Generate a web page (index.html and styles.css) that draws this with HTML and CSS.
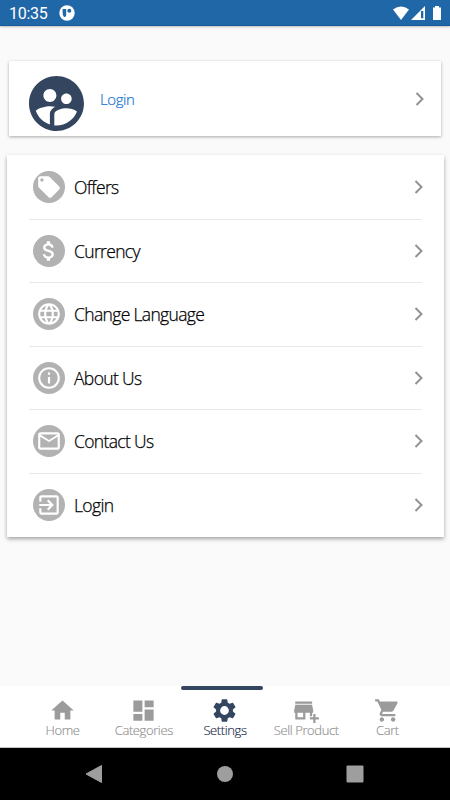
FILE: index.html
```html
<!DOCTYPE html>
<html lang="en">

<head>
    <meta charset="UTF-8">
    <meta name="viewport" content="width=device-width, initial-scale=1.0">
    <title>Settings</title>
    <link rel="stylesheet" href="styles.css">
</head>

<body>

    <header class="status">
        <span class="time">10:35</span>
        <svg class="app-dot" viewBox="0 0 16 16"><circle cx="8" cy="8" r="7.7" fill="#fff"/><path d="M3.600 4h3.600v6a2 2 0 0 1-2.200 2q-1.400-1.500-1.400-4z" fill="#2067a8"/><circle cx="10.300" cy="5.700" r="2" fill="#2067a8"/></svg>
        <svg class="signals" viewBox="0 0 50 16"><path d="M0 3.6Q8-2.6 16 3.6L8 14z" fill="#fff"/><path d="M32 0v14H18z" fill="#fff"/><path d="M28 5h2.3v7.3H28z" fill="#2067a8"/><path d="M40 1.5h2V0h4v1.5h2V14h-8z" fill="#fff"/></svg>
    </header>

    <main class="page">
        <!-- profile card -->
        <div class="card profile">
            <svg class="avatar" viewBox="2 2 20 20"><path d="M11.99 2c-5.52 0-10 4.48-10 10s4.48 10 10 10 10-4.48 10-10-4.48-10-10-10zm3.61 6.34c1.07 0 1.93.86 1.93 1.93 0 1.07-.86 1.93-1.93 1.93-1.07 0-1.93-.86-1.93-1.93-.01-1.07.86-1.93 1.93-1.93zm-6-1.58c1.3 0 2.36 1.06 2.36 2.36 0 1.3-1.06 2.36-2.36 2.36s-2.36-1.06-2.36-2.36c0-1.31 1.05-2.36 2.36-2.36zm0 9.13v3.75c-2.4-.75-4.3-2.6-5.14-4.96 1.05-1.12 3.67-1.69 5.14-1.69.53 0 1.2.08 1.9.22-1.64.87-1.9 2.02-1.9 2.68zM11.99 20c-.27 0-.53-.01-.79-.04v-4.07c0-1.42 2.94-2.13 4.4-2.13 1.07 0 2.92.39 3.84 1.15-1.17 2.97-4.06 5.09-7.45 5.09z"/></svg>
            <a class="login">Login</a>
            <svg class="arrow" viewBox="0 0 8 14"><path d="M1 1l6 6-6 6"/></svg>
        </div>

        <!-- settings list -->
        <div class="card list">
            <div class="row">
                <span class="badge"><svg viewBox="0 0 24 24"><path d="M21.41 11.58l-9-9C12.05 2.22 11.55 2 11 2H4c-1.1 0-2 .9-2 2v7c0 .55.22 1.05.59 1.42l9 9c.36.36.86.58 1.41.58s1.05-.22 1.41-.59l7-7c.37-.36.59-.86.59-1.41s-.23-1.06-.59-1.42zM5.5 7C4.67 7 4 6.33 4 5.5S4.67 4 5.5 4 7 4.67 7 5.5 6.33 7 5.5 7z"/></svg></span>
                <span class="label">Offers</span>
                <svg class="arrow" viewBox="0 0 8 14"><path d="M1 1l6 6-6 6"/></svg>
            </div>
            <div class="row">
                <span class="badge"><svg viewBox="0 0 24 24"><path d="M11.8 10.9c-2.27-.59-3-1.2-3-2.15 0-1.09 1.01-1.85 2.7-1.85 1.78 0 2.44.85 2.5 2.1h2.21c-.07-1.72-1.12-3.3-3.21-3.81V3h-3v2.16c-1.94.42-3.5 1.68-3.5 3.61 0 2.31 1.91 3.46 4.7 4.13 2.5.6 3 1.48 3 2.41 0 .69-.49 1.79-2.7 1.79-2.06 0-2.87-.92-2.98-2.1h-2.2c.12 2.19 1.76 3.42 3.68 3.83V21h3v-2.15c1.95-.37 3.5-1.5 3.5-3.55 0-2.84-2.43-3.81-4.7-4.4z"/></svg></span>
                <span class="label">Currency</span>
                <svg class="arrow" viewBox="0 0 8 14"><path d="M1 1l6 6-6 6"/></svg>
            </div>
            <div class="row">
                <span class="badge"><svg viewBox="0 0 24 24"><path d="M11.99 2C6.47 2 2 6.48 2 12s4.47 10 9.99 10C17.52 22 22 17.52 22 12S17.52 2 11.99 2zm6.93 6h-2.95c-.32-1.25-.78-2.45-1.38-3.56 1.84.63 3.37 1.91 4.33 3.56zM12 4.04c.83 1.2 1.48 2.53 1.91 3.96h-3.82c.43-1.43 1.08-2.76 1.91-3.96zM4.26 14C4.1 13.36 4 12.69 4 12s.1-1.36.26-2h3.38c-.08.66-.14 1.32-.14 2s.06 1.34.14 2H4.26zm.82 2h2.95c.32 1.25.78 2.45 1.38 3.56-1.84-.63-3.37-1.9-4.33-3.56zm2.95-8H5.08c.96-1.66 2.49-2.93 4.33-3.56C8.81 5.55 8.35 6.75 8.03 8zM12 19.96c-.83-1.2-1.48-2.53-1.91-3.96h3.82c-.43 1.43-1.08 2.76-1.91 3.96zM14.34 14H9.66c-.09-.66-.16-1.32-.16-2s.07-1.35.16-2h4.68c.09.65.16 1.32.16 2s-.07 1.34-.16 2zm.25 5.56c.6-1.11 1.06-2.31 1.38-3.56h2.95c-.96 1.65-2.49 2.93-4.33 3.56zM16.36 14c.08-.66.14-1.32.14-2s-.06-1.34-.14-2h3.38c.16.64.26 1.31.26 2s-.1 1.36-.26 2h-3.38z"/></svg></span>
                <span class="label">Change Language</span>
                <svg class="arrow" viewBox="0 0 8 14"><path d="M1 1l6 6-6 6"/></svg>
            </div>
            <div class="row">
                <span class="badge"><svg viewBox="0 0 24 24"><path d="M11 7h2v2h-2zm0 4h2v6h-2zm1-9C6.48 2 2 6.48 2 12s4.48 10 10 10 10-4.48 10-10S17.52 2 12 2zm0 18c-4.41 0-8-3.59-8-8s3.59-8 8-8 8 3.59 8 8-3.59 8-8 8z"/></svg></span>
                <span class="label">About Us</span>
                <svg class="arrow" viewBox="0 0 8 14"><path d="M1 1l6 6-6 6"/></svg>
            </div>
            <div class="row">
                <span class="badge"><svg viewBox="0 0 24 24"><path d="M22 6c0-1.100-.9-2-2-2H4c-1.100 0-2 .9-2 2v12c0 1.100.9 2 2 2h16c1.100 0 2-.9 2-2V6zm-2 0l-8 5-8-5h16zm0 12H4V8l8 5 8-5v10z"/></svg></span>
                <span class="label">Contact Us</span>
                <svg class="arrow" viewBox="0 0 8 14"><path d="M1 1l6 6-6 6"/></svg>
            </div>
            <div class="row">
                <span class="badge"><svg viewBox="0 0 24 24"><path d="M10.090 15.590L11.500 17l5-5-5-5-1.410 1.410L12.670 11H3v2h9.670l-2.580 2.590zM19 3H5c-1.110 0-2 .9-2 2v4h2V5h14v14H5v-4H3v4c0 1.100.89 2 2 2h14c1.100 0 2-.9 2-2V5c0-1.100-.9-2-2-2z"/></svg></span>
                <span class="label">Login</span>
                <svg class="arrow" viewBox="0 0 8 14"><path d="M1 1l6 6-6 6"/></svg>
            </div>
        </div>
    </main>

    <nav class="tabs">
        <div class="tab">
            <svg viewBox="0 0 24 24"><path d="M10 20v-6h4v6h5v-8h3L12 3 2 12h3v8z"/></svg>
            <span>Home</span>
        </div>
        <div class="tab">
            <svg viewBox="0 0 24 24"><path d="M3 13h8V3H3v10zm0 8h8v-6H3v6zm10 0h8V11h-8v10zm0-18v6h8V3h-8z"/></svg>
            <span>Categories</span>
        </div>
        <div class="tab active">
            <svg viewBox="0 0 24 24"><path d="M19.430 12.980c.04-.32.07-.64.07-.98s-.03-.66-.07-.98l2.110-1.650c.19-.15.24-.42.12-.64l-2-3.460c-.12-.22-.39-.3-.61-.22l-2.490 1c-.52-.4-1.080-.73-1.690-.98l-.38-2.650C14.460 2.180 14.250 2 14 2h-4c-.25 0-.46.18-.49.42l-.38 2.650c-.61.25-1.170.59-1.690.98l-2.490-1c-.23-.09-.49 0-.61.22l-2 3.460c-.13.22-.07.49.12.64l2.110 1.650c-.04.32-.07.65-.07.98s.03.66.07.98l-2.110 1.650c-.19.15-.24.42-.12.64l2 3.460c.12.22.39.3.61.22l2.490-1c.52.4 1.080.73 1.690.98l.38 2.650c.03.24.24.42.49.42h4c.25 0 .46-.18.49-.42l.38-2.650c.61-.25 1.170-.59 1.690-.98l2.490 1c.23.09.49 0 .61-.22l2-3.460c.12-.22.07-.49-.12-.64l-2.110-1.650zM12 15.900a3.900 3.900 0 1 1 0-7.800 3.900 3.900 0 0 1 0 7.800z"/></svg>
            <span>Settings</span>
        </div>
        <div class="tab">
            <svg viewBox="0 0 24 24"><path d="M15 17h2v-3h1v-2l-1-5H2l-1 5v2h1v6h9v-6h4v3zm-6 1H4v-4h5v4zM2 4h15v2H2zM20 18v-3h-2v3h-3v2h3v3h2v-3h3v-2z"/><path d="M2 6h15v1H2z" opacity=".35"/></svg>
            <span>Sell Product</span>
        </div>
        <div class="tab">
            <svg viewBox="0 0 24 24"><path d="M7 18c-1.100 0-1.990.9-1.990 2S5.900 22 7 22s2-.9 2-2-.9-2-2-2zM1 2v2h2l3.600 7.590-1.350 2.450c-.16.28-.25.61-.25.96 0 1.100.9 2 2 2h12v-2H7.420c-.14 0-.25-.11-.25-.25l.03-.12.9-1.630h7.450c.75 0 1.410-.41 1.750-1.030l3.580-6.490c.08-.14.12-.31.12-.48 0-.55-.45-1-1-1H5.210l-.94-2H1zm16 16c-1.100 0-1.990.9-1.990 2s.89 2 1.990 2 2-.9 2-2-.9-2-2-2z"/></svg>
            <span>Cart</span>
        </div>
    </nav>

    <footer class="system">
        <svg viewBox="0 0 18 18"><path d="M16.500.5v17L1 9z" stroke-linejoin="round" stroke="#9e9e9e"/></svg>
        <svg viewBox="0 0 18 18"><circle cx="9" cy="9" r="8"/></svg>
        <svg viewBox="0 0 18 18"><rect x=".5" y=".5" width="17" height="17" rx="1"/></svg>
    </footer>

</body>
</html>
```
FILE: styles.css
```css
* {
    box-sizing: border-box;
}

body {
    margin: 0;
    height: 800px;
    display: flex;
    flex-direction: column;
    overflow: hidden;
    background-color: #fafafa;
    font-family: "Open Sans", "Noto Sans", sans-serif;
}

svg {
    display: block;
    flex: none;
}

.status {
    height: 26px;
    padding: 1px 8px 0 9px;
    display: flex;
    align-items: center;
    background-color: #2067a8;
    border-bottom: 1px solid #185a98;
    box-shadow: 0 1px 2px rgba(0, 0, 0, 0.25);
}

.time {
    width: 50px;
    font-family: Roboto, sans-serif;
    font-size: 16px;
    letter-spacing: -0.3px;
    color: #fff;
}

.app-dot {
    width: 16px;
    height: 16px;
}

.signals {
    width: 50px;
    height: 16px;
    margin-left: auto;
    margin-top: 2px;
    margin-right: -1px;
}

.page {
    flex: 1;
    padding: 35px 7px 0;
}

.card {
    background-color: #fff;
    box-shadow: 0 1px 3px rgba(0, 0, 0, 0.32);
}

.profile {
    height: 75px;
    margin: 0 2px 19px;
    padding: 0 17px 0 20px;
    display: flex;
    align-items: center;
}

.avatar {
    width: 55px;
    height: 55px;
    margin-top: 9px;
    fill: #34455f;
}

.login {
    margin-left: 16px;
    font-size: 15px;
    font-weight: 300;
    letter-spacing: -0.4px;
    color: #1673d1;
    -webkit-text-stroke: 0.2px #1673d1;
}

.arrow {
    width: 9px;
    height: 14px;
    margin-left: auto;
    fill: none;
    stroke: #929292;
    stroke-width: 2;
}

.list {
    height: 382px;
    padding: 1px 22px 0;
    margin-right: -1px;
    display: grid;
    grid-template-rows: repeat(6, 1fr);
    box-shadow: 0 2px 4px rgba(0, 0, 0, 0.35);
}

.row {
    display: flex;
    align-items: center;
    padding: 0 0 0 4px;
    border-bottom: 1px solid #e8e8e8;
}

.row .arrow {
    margin-right: -1px;
}

.row:last-child {
    border-bottom: none;
}

.badge {
    width: 32px;
    height: 32px;
    display: flex;
    align-items: center;
    justify-content: center;
    border-radius: 50%;
    background-color: #b2b2b2;
}

.badge svg {
    width: 26px;
    height: 26px;
    fill: #fff;
}

.label {
    margin-left: 9px;
    font-size: 17.5px;
    font-weight: 300;
    letter-spacing: -0.65px;
    color: #000;
    -webkit-text-stroke: 0.25px #000;
}

.tabs {
    height: 62px;
    padding: 0 22px;
    display: grid;
    grid-template-columns: repeat(5, 1fr);
    background-color: #fff;
    border-bottom: 1px solid #c4c4c4;
}

.tab {
    display: flex;
    flex-direction: column;
    align-items: center;
    padding-top: 7px;
    border-top: 4px solid transparent;
    font-size: 13px;
    font-weight: 300;
    line-height: 13px;
    letter-spacing: -0.4px;
    white-space: nowrap;
    color: #8f8f8f;
    fill: #9b9b9b;
    -webkit-text-stroke: 0.15px;
}

.tab svg {
    width: 27px;
    height: 27px;
}

.active {
    position: relative;
    color: #172849;
    fill: #34455f;
}

/* marker above the selected tab */
.active::before {
    content: "";
    position: absolute;
    top: -4px;
    left: -3px;
    width: 82px;
    height: 4px;
    border-radius: 2px;
    background-color: #34455f;
}

.system {
    height: 52px;
    padding: 0 86px 0 85px;
    display: flex;
    align-items: center;
    justify-content: space-between;
    background-color: #000;
    fill: #9e9e9e;
}

.system svg {
    width: 18px;
    height: 18px;
}
```
